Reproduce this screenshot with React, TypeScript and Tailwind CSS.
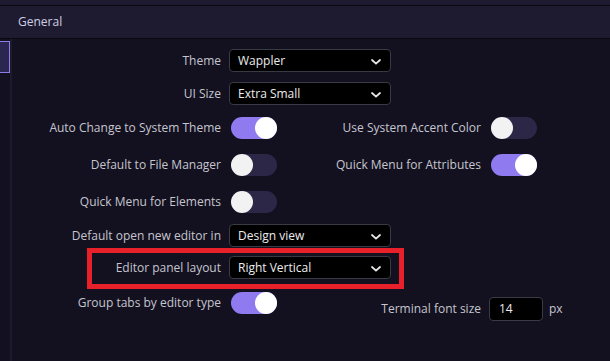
import React from 'react';

const font = { fontFamily: '"Open Sans", "Noto Sans", sans-serif' };

const Chevron = () => (
  <svg width="10" height="6" viewBox="0 0 10 6" className="absolute right-[9px] top-[9px]">
    <path d="M1 1l4 3.6L9 1" fill="none" stroke="#e6e6e6" strokeWidth="1.8" strokeLinecap="round" />
  </svg>
);

const Select = ({ value }: { value: string }) => (
  <div className="relative ml-[8px] flex h-[23px] w-[162px] items-center rounded-[4px] border border-[#3a3a44] bg-black pl-[8px] text-[12px] text-[#ececec]">
    {value}
    <Chevron />
  </div>
);

const Toggle = ({ on }: { on?: boolean }) => (
  <div
    className={`flex h-[22px] w-[46px] shrink-0 rounded-full ${on ? 'justify-end bg-[#8f7bef]' : 'justify-start bg-[#2c2746]'}`}
  >
    <div className={`h-[22px] w-[22px] rounded-full ${on ? 'bg-white' : 'bg-[#f2f2f2]'}`} />
  </div>
);

const Label = ({ children, w = 'w-[209px]' }: { children: React.ReactNode; w?: string }) => (
  <div className={`${w} shrink-0 text-right text-[12px] leading-none text-[#c6c5cf]`}>{children}</div>
);

const SelectRow = ({ label, value, mt }: { label: string; value: string; mt: string }) => (
  <div className={`flex items-center ${mt}`}>
    <Label>{label}</Label>
    <Select value={value} />
  </div>
);

const ToggleCell = ({ on }: { on?: boolean }) => (
  <div className="ml-[10px] w-[48px] shrink-0">
    <Toggle on={on} />
  </div>
);

export default function App() {
  return (
    <div className="flex h-[361px] w-[610px] flex-col overflow-hidden bg-[#13111f]" style={font}>
      <div className="h-[5px] bg-[#1e1b31]" />
      <div className="flex h-[34px] items-center border-y border-[#0a0911] bg-[#1e1b31] pl-[18px] text-[12px] text-[#cfcfe3]">
        General
      </div>
      <div className="relative flex flex-1">
        <div className="w-[12px] shrink-0 border-r-2 border-[#1d1a2d]">
          <div className="mt-[2px] h-[32px] w-[10px] border border-l-0 border-[#8c7de6] bg-[#2a2551]" />
        </div>
        <div className="flex flex-1 flex-col pt-[10px]">
          <SelectRow label="Theme" value="Wappler" mt="mt-0" />
          <SelectRow label="UI Size" value="Extra Small" mt="mt-[10px]" />

          <div className="mt-[12px] flex items-center">
            <Label>Auto Change to System Theme</Label>
            <ToggleCell on />
            <Label w="w-[202px]">Use System Accent Color</Label>
            <ToggleCell />
          </div>
          <div className="mt-[15px] flex items-center">
            <Label>Default to File Manager</Label>
            <ToggleCell />
            <Label w="w-[202px]">Quick Menu for Attributes</Label>
            <ToggleCell on />
          </div>
          <div className="mt-[15px] flex items-center">
            <Label>Quick Menu for Elements</Label>
            <ToggleCell />
          </div>

          <SelectRow label="Default open new editor in" value="Design view" mt="mt-[11px]" />
          <SelectRow label="Editor panel layout" value="Right Vertical" mt="mt-[9px]" />

          <div className="mt-[13px] flex items-start">
            <div className="flex h-[22px] items-center">
              <Label>Group tabs by editor type</Label>
              <ToggleCell on />
            </div>
            <div className="mt-[5px] flex h-[24px] items-center">
              <Label w="w-[202px]">Terminal font size</Label>
              <div className="ml-[8px] flex h-[24px] w-[54px] items-center rounded-[4px] border border-[#3a3a44] bg-black pl-[9px] text-[12px] text-[#ececec]">
                14
              </div>
              <span className="ml-[6px] text-[12px] text-[#c6c5cf]">px</span>
            </div>
          </div>
        </div>
        <div className="pointer-events-none absolute left-[87px] top-[209px] h-[41px] w-[317px] border-[5px] border-[#e8202a]" />
      </div>
    </div>
  );
}
